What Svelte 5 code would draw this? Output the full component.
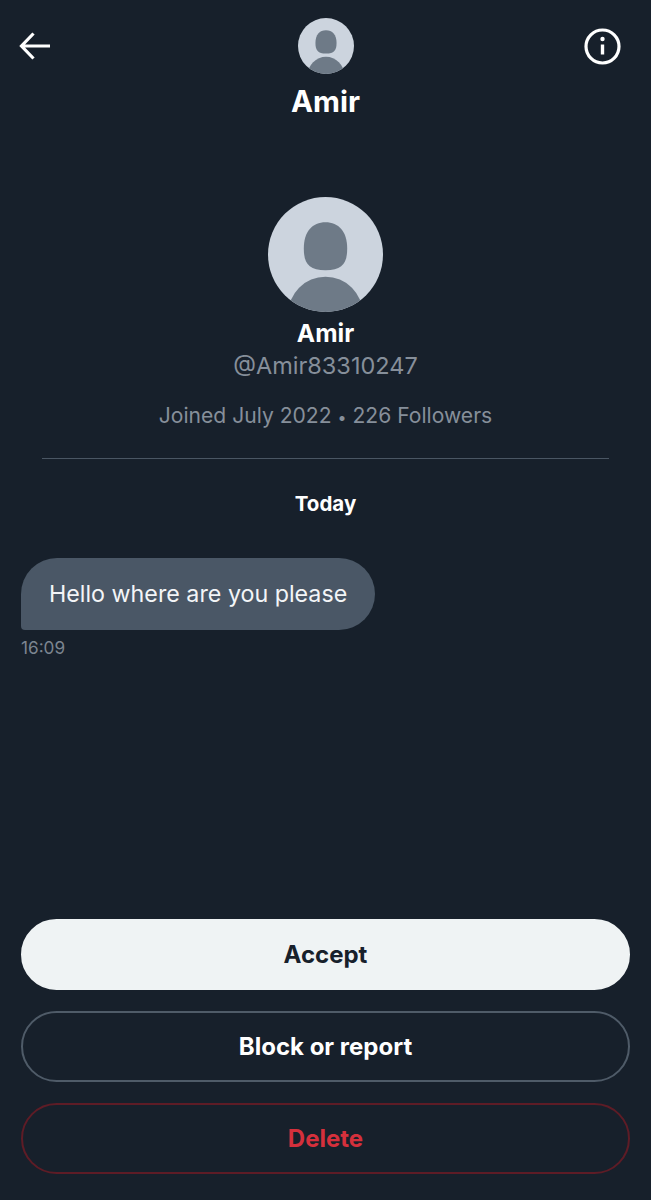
<script>
  const name = "Amir";
  const handle = "@Amir83310247";
</script>

{#snippet avatar(size)}
  <svg class="avatar" width={size} height={size} viewBox="0 0 114 114">
    <defs>
      <clipPath id="circle-{size}"><circle cx="57" cy="57" r="57" /></clipPath>
    </defs>
    <g clip-path="url(#circle-{size})">
      <rect width="114" height="114" fill="#ccd4de" />
      <path d="M57 25c-13 0-21.500 9-21.500 26 0 15 5 21.500 21.500 21.500s21.500-6.500 21.500-21.500c0-17-8.500-26-21.500-26z" fill="#6e7a87" />
      <circle cx="57" cy="116" r="37" fill="#6e7a87" />
    </g>
  </svg>
{/snippet}

<main class="screen">
  <header class="topbar">
    <button class="icon-btn back" aria-label="Back">
      <svg width="32" height="28" viewBox="0 0 32 28" fill="none" stroke="#fff" stroke-width="3.200">
        <path d="M31 14H3M14.500 1.500 2.500 14l12 12.500" />
      </svg>
    </button>
    <div class="title">
      {@render avatar(56)}
      <h1>{name}</h1>
    </div>
    <button class="icon-btn info" aria-label="Info">
      <svg width="37" height="37" viewBox="0 0 37 37" fill="none" stroke="#fff">
        <circle cx="18.500" cy="18.500" r="16.500" stroke-width="3.200" />
        <path d="M18.500 16.500v10" stroke-width="3.400" />
        <circle cx="18.500" cy="11" r="2.200" fill="#fff" stroke="none" />
      </svg>
    </button>
  </header>

  <section class="profile">
    {@render avatar(115)}
    <div class="profile-name">{name}</div>
    <div class="handle">{handle}</div>
    <div class="meta">Joined July 2022 <span class="dot">•</span> 226 Followers</div>
  </section>

  <hr />

  <div class="day">Today</div>

  <div class="message">
    <div class="bubble">Hello where are you please</div>
    <div class="time">16:09</div>
  </div>

  <div class="actions">
    <button class="btn primary">Accept</button>
    <button class="btn outline">Block or report</button>
    <button class="btn danger">Delete</button>
  </div>
</main>

<style>
  :global(body) {
    background: #17202b;
  }

  .screen {
    min-height: 1200px;
    box-sizing: border-box;
    display: flex;
    flex-direction: column;
    background: #17202b;
    color: #fff;
    font-family: Inter, "Liberation Sans", sans-serif;
    padding: 18px 21px 26px;
  }

  .topbar {
    display: grid;
    grid-template-columns: 1fr auto 1fr;
    align-items: start;
  }

  .icon-btn {
    background: none;
    border: none;
    padding: 0;
    display: flex;
  }

  .back {
    justify-self: start;
    margin: 14px 0 0 -2px;
  }

  .info {
    justify-self: end;
    margin: 9.500px 9.500px 0 0;
  }

  .avatar {
    display: block;
  }

  .title {
    display: flex;
    flex-direction: column;
    align-items: center;
  }

  h1 {
    margin: 10px 0 0;
    font-size: 29.500px;
    line-height: 34px;
    font-weight: 700;
  }

  .profile {
    display: flex;
    flex-direction: column;
    align-items: center;
    margin-top: 79px;
  }

  .profile-name {
    margin-top: 6px;
    font-size: 24.500px;
    line-height: 30px;
    font-weight: 700;
  }

  .handle {
    margin-top: 2px;
    font-size: 23.500px;
    line-height: 32px;
    color: #868f9a;
  }

  .meta {
    margin-top: 19px;
    font-size: 21.100px;
    line-height: 30px;
    color: #868f9a;
  }

  .dot {
    font-size: 16px;
  }

  hr {
    width: 567px;
    margin: 26px auto 0;
    border: none;
    border-top: 1.500px solid #4a5663;
  }

  .day {
    margin-top: 32px;
    text-align: center;
    font-size: 20.500px;
    line-height: 26px;
    font-weight: 700;
  }

  .message {
    margin-top: 41px;
  }

  .bubble {
    display: inline-block;
    background: #4a5766;
    border-radius: 36px 36px 36px 4px;
    padding: 20px 28px;
    font-size: 23.250px;
    line-height: 32px;
    color: #f3f5f7;
  }

  .time {
    margin-top: 6px;
    font-size: 17.200px;
    line-height: 24px;
    color: #7c8590;
  }

  .actions {
    margin-top: auto;
    display: flex;
    flex-direction: column;
    gap: 21px;
  }

  .btn {
    height: 71px;
    box-sizing: border-box;
    border-radius: 36px;
    background: none;
    font: inherit;
    font-size: 24px;
    font-weight: 700;
    color: #fff;
    border: 2px solid #4f5b68;
  }

  .primary {
    background: #eff3f4;
    border-color: #eff3f4;
    color: #17202b;
  }

  .danger {
    border-color: #5e1c26;
    color: #d5303c;
  }
</style>
